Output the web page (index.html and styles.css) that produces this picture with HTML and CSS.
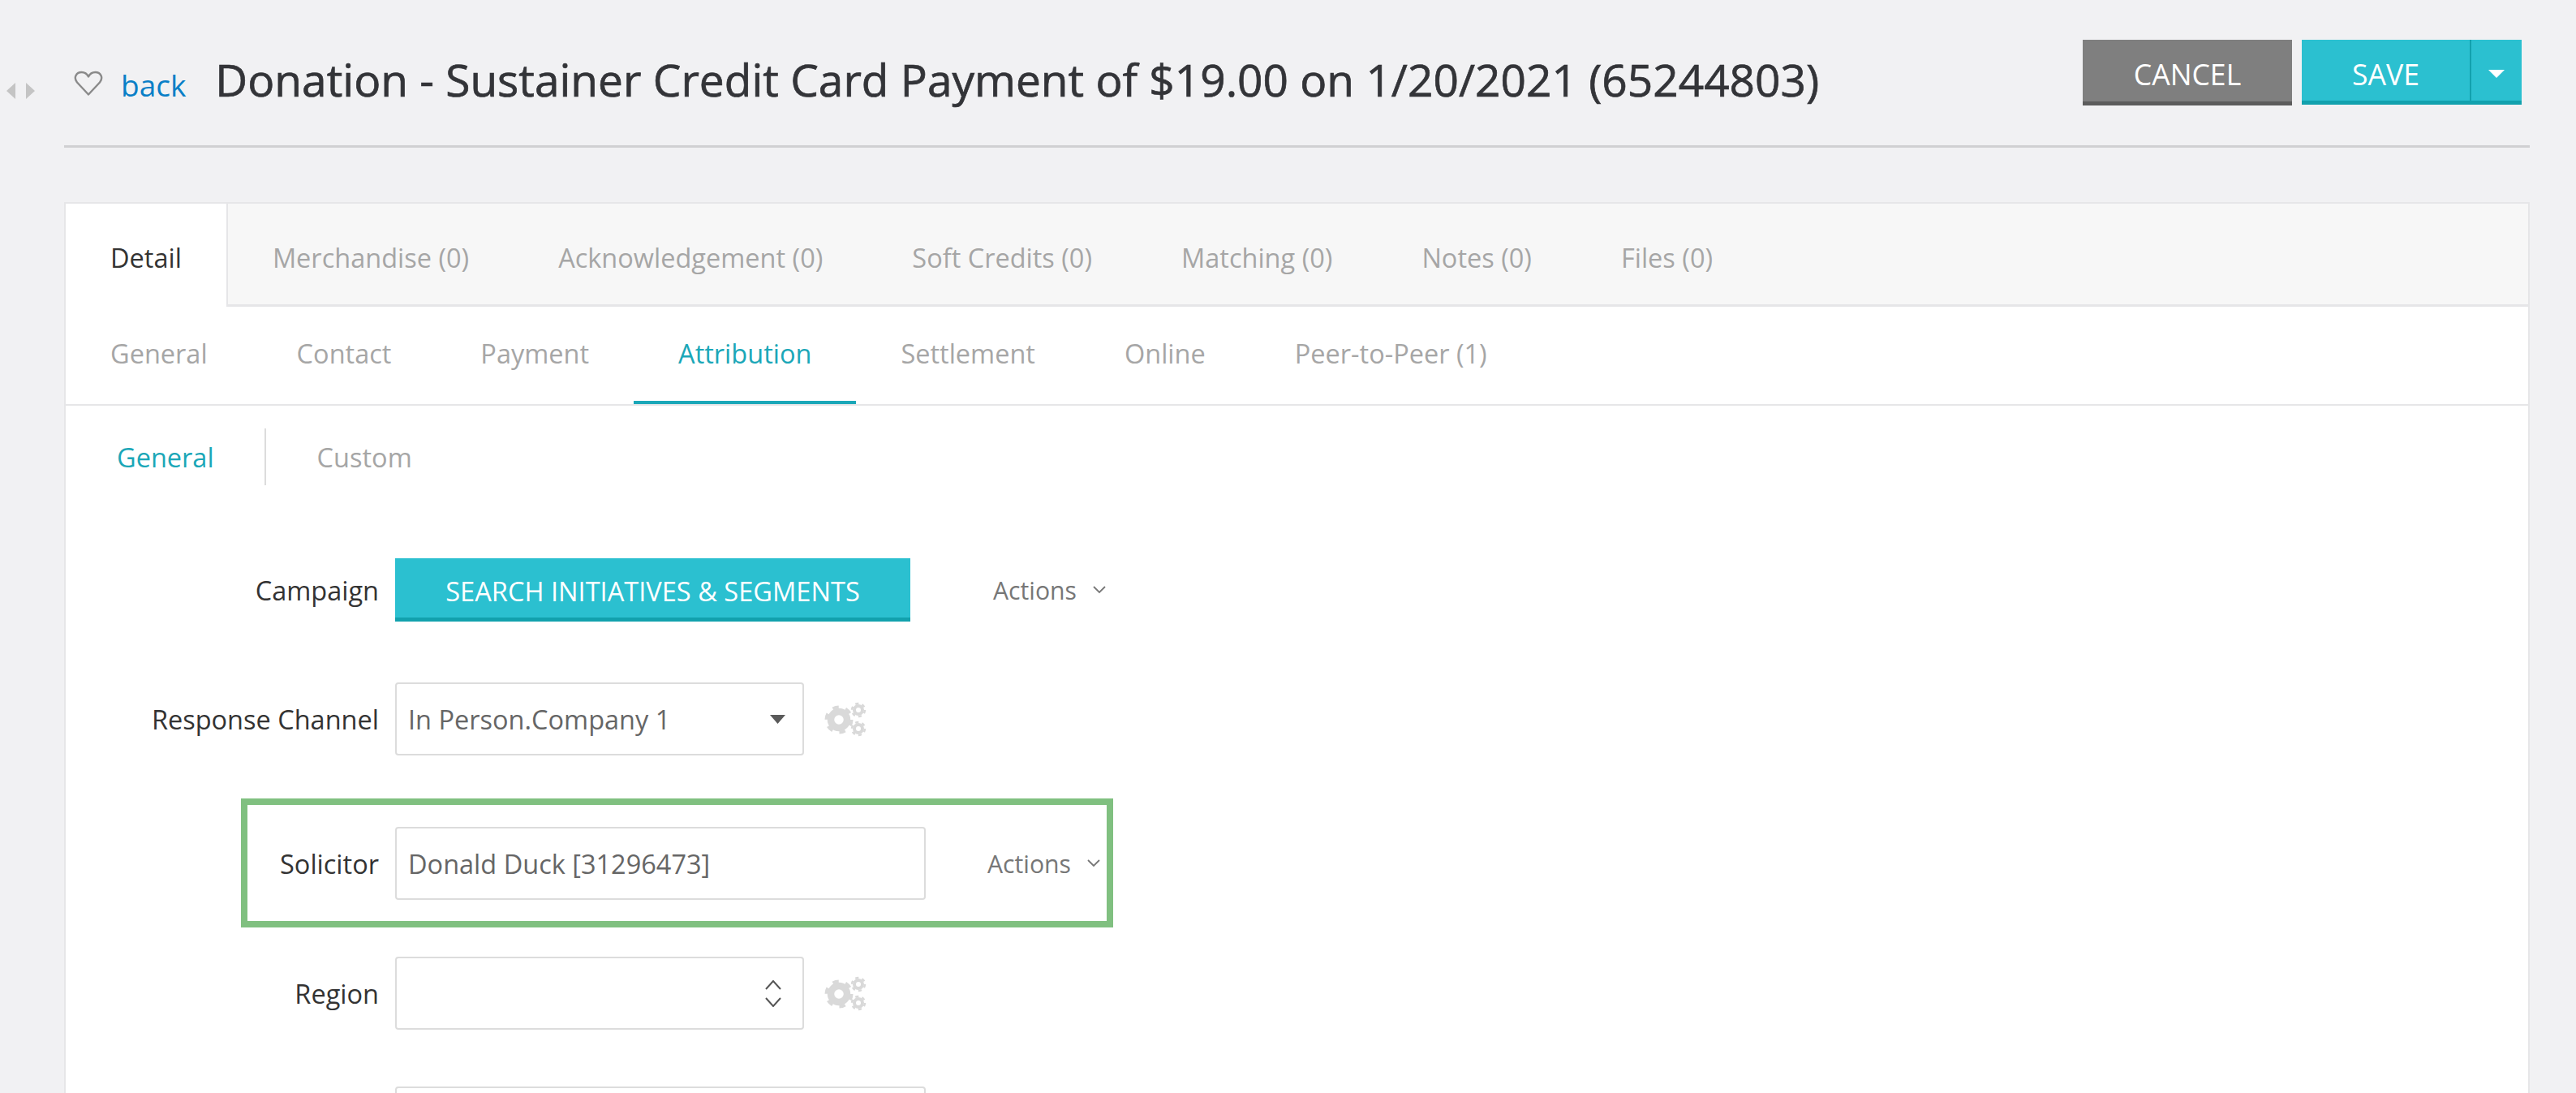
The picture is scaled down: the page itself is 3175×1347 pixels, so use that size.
FILE: index.html
```html
<!DOCTYPE html>
<html lang="en">
<head>
  <meta charset="UTF-8">
  <title>Donation - Sustainer Credit Card Payment</title>
  <link rel="stylesheet" href="styles.css">
</head>
<body>
  <svg class="defs" width="0" height="0">
    <symbol id="gears" viewBox="0 0 52 46">
      <g fill="none" stroke="#d9d9d9">
        <circle cx="18" cy="24" r="10" stroke-width="8.5"/>
        <circle cx="18" cy="24" r="15.5" stroke-width="4" stroke-dasharray="7.5 8.7"/>
        <circle cx="42" cy="12" r="5" stroke-width="4"/>
        <circle cx="42" cy="12" r="8" stroke-width="2.5" stroke-dasharray="4.2 4.2"/>
        <circle cx="42" cy="35" r="5" stroke-width="4"/>
        <circle cx="42" cy="35" r="8" stroke-width="2.5" stroke-dasharray="4.2 4.2"/>
      </g>
    </symbol>
  </svg>

  <!-- side handle -->
  <div class="handle">
    <svg width="37" height="20" viewBox="0 0 37 20"><path d="M12 0v20L1 10zM25 0v20l11-10z" fill="#c4c4c4"/></svg>
  </div>

  <header class="page-head">
    <div class="head-left">
      <svg class="heart" width="36" height="32" viewBox="0 0 36 32"><path d="M18 29.5 4 14.5C-1 8 3.500 2 9.500 2c3.800 0 6.800 2 8.500 5.500C19.700 4 22.700 2 26.500 2 32.500 2 37 8 32 14.500z" fill="none" stroke="#8a8a8a" stroke-width="2.400" stroke-linejoin="round"/></svg>
      <a class="back" href="#">back</a>
      <h1>Donation - Sustainer Credit Card Payment of $19.00 on 1/20/2021 (65244803)</h1>
    </div>
    <div class="head-actions">
      <button class="btn btn-grey">CANCEL</button>
      <div class="split">
        <button class="btn btn-teal btn-save">SAVE</button>
        <button class="btn btn-teal btn-caret"><svg width="20" height="10" viewBox="0 0 20 10"><path d="M0 0h20L10 10z" fill="#fff"/></svg></button>
      </div>
    </div>
  </header>

  <main class="card">
    <nav class="tabs">
      <a class="tab active" href="#">Detail</a>
      <a class="tab" href="#">Merchandise (0)</a>
      <a class="tab" href="#">Acknowledgement (0)</a>
      <a class="tab" href="#">Soft Credits (0)</a>
      <a class="tab" href="#">Matching (0)</a>
      <a class="tab" href="#">Notes (0)</a>
      <a class="tab" href="#">Files (0)</a>
    </nav>
    <nav class="subtabs">
      <a class="subtab" href="#">General</a>
      <a class="subtab" href="#">Contact</a>
      <a class="subtab" href="#">Payment</a>
      <a class="subtab active" href="#">Attribution</a>
      <a class="subtab" href="#">Settlement</a>
      <a class="subtab" href="#">Online</a>
      <a class="subtab" href="#">Peer-to-Peer (1)</a>
    </nav>
    <nav class="pills">
      <a class="pill active" href="#">General</a>
      <a class="pill" href="#">Custom</a>
    </nav>

    <section class="form">
      <div class="row row-campaign">
        <label>Campaign</label>
        <button class="btn btn-teal btn-search">SEARCH INITIATIVES &amp; SEGMENTS</button>
        <a class="actions" href="#">Actions <svg width="16" height="10" viewBox="0 0 16 10"><path d="M1 1l7 7 7-7" fill="none" stroke="#777" stroke-width="1.800"/></svg></a>
      </div>

      <div class="row row-channel">
        <label>Response Channel</label>
        <div class="input input-short">
          <span>In Person.Company 1</span>
          <svg class="caret" width="19" height="11" viewBox="0 0 19 11"><path d="M0 0h19L9.500 11z" fill="#5a5a5a"/></svg>
        </div>
        <svg class="gears"><use href="#gears"/></svg>
      </div>

      <div class="row highlight">
        <label>Solicitor</label>
        <div class="input input-long"><span>Donald Duck [31296473]</span></div>
        <a class="actions" href="#">Actions <svg width="16" height="10" viewBox="0 0 16 10"><path d="M1 1l7 7 7-7" fill="none" stroke="#777" stroke-width="1.800"/></svg></a>
      </div>

      <div class="row row-region">
        <label>Region</label>
        <div class="input input-short">
          <svg class="updown" width="20" height="33" viewBox="0 0 20 33"><path d="M1 11 10 1l9 10M1 22l9 10 9-10" fill="none" stroke="#555" stroke-width="2"/></svg>
        </div>
        <svg class="gears"><use href="#gears"/></svg>
      </div>

      <div class="row row-last">
        <label></label>
        <div class="input input-long"></div>
      </div>
    </section>
  </main>
</body>
</html>
```

FILE: styles.css
```css
html, body {
  margin: 0;
  height: 1347px;
  overflow: hidden;
}

body {
  font-family: "Open Sans", sans-serif;
  font-size: 32.5px;
  background-color: #f1f1f3;
  color: #333;
  position: relative;
}

a {
  text-decoration: none;
  color: inherit;
}

.defs {
  position: absolute;
}

.handle {
  position: absolute;
  left: 7px;
  top: 102px;
  line-height: 0;
}

/* Header */
.page-head {
  margin: 0 57px 0 79px;
  height: 179px;
  border-bottom: 3px solid #d0d0d2;
  display: flex;
  justify-content: space-between;
  align-items: flex-start;
  padding-right: 10px;
}

.head-left {
  display: flex;
  align-items: baseline;
  padding-top: 60px;
}

.heart {
  margin-left: 12px;
  align-self: flex-start;
  margin-top: -32px;
  transform: translateY(59px);
}

.back {
  color: #0a7fc7;
  font-size: 37px;
  margin-left: 22px;
}

h1 {
  margin: 0 0 0 36px;
  font-size: 55px;
  font-weight: 400;
  color: #333438;
  -webkit-text-stroke: 0.7px #333438;
}

.head-actions {
  display: flex;
  gap: 12px;
  padding-top: 49px;
}

.btn {
  border: 0;
  border-radius: 0;
  font-family: inherit;
  color: #fff;
  cursor: pointer;
  padding: 8px 0 0;
}

.btn-grey {
  width: 258px;
  height: 81px;
  font-size: 35.6px;
  background-color: #7f7f7f;
  border-bottom: 5px solid #5c5c5c;
}

.btn-teal {
  background-color: #2bc0d0;
  border-bottom: 5px solid #12a1ad;
}

.split {
  display: flex;
}

.btn-save {
  width: 209px;
  height: 80px;
  font-size: 35.6px;
  border-right: 2px solid #12a1ad;
}

.btn-caret {
  width: 62px;
  height: 80px;
}

/* Card */
.card {
  margin: 67px 57px 0 79px;
  height: 1098px;
  overflow: hidden;
  box-sizing: border-box;
  background-color: #fff;
  border: 2px solid #e6e6e8;
  border-bottom: 0;
}

.tabs {
  display: flex;
  height: 127px;
  background-color: #f7f7f7;
  border-bottom: 3px solid #e6e6e8;
  box-sizing: border-box;
}

.tab {
  padding: 0 55px;
  line-height: 133px;
  color: #a6a6a6;
}

.tab.active {
  color: #333;
  background-color: #fff;
  height: 127px;
  box-sizing: border-box;
  border-right: 2px solid #e6e6e8;
}

.subtabs {
  display: flex;
  height: 122px;
  box-sizing: border-box;
  border-bottom: 2px solid #e6e6e8;
}

.subtab {
  padding: 0 55px;
  height: 120px;
  line-height: 115px;
  box-sizing: border-box;
  color: #a6a6a6;
}

.subtab.active {
  color: #1ba7b8;
  border-bottom: 4px solid #1ba7b8;
}

.pills {
  display: flex;
  margin-top: 28px;
  padding-left: 63px;
}

.pill {
  height: 70px;
  line-height: 72px;
  color: #a6a6a6;
}

.pill.active {
  color: #1ba7b8;
  padding-right: 62px;
  margin-right: 63px;
  border-right: 2px solid #dcdcdc;
}

/* Form rows */
.form {
  padding-top: 90px;
}

.row {
  display: flex;
  align-items: center;
}

.row label {
  width: 406px;
  padding-right: 20px;
  box-sizing: border-box;
  text-align: right;
  color: #333;
}

.row-channel {
  margin-top: 75px;
}

.highlight {
  margin: 53px 0 36px 216px;
  width: 1075px;
  box-sizing: border-box;
  border: 8px solid #80c080;
  padding: 27px 0 26px;
}

.highlight label {
  width: 182px;
}

.row-last {
  margin-top: 70px;
}

.btn-search {
  width: 635px;
  height: 78px;
  font-size: 32.6px;
}

.input {
  height: 90px;
  box-sizing: border-box;
  border: 2px solid #dcdcdc;
  border-radius: 4px;
  background-color: #fff;
  color: #666;
  padding: 0 14px;
  display: flex;
  align-items: center;
  justify-content: space-between;
}

.input-short {
  width: 504px;
}

.input-long {
  width: 654px;
}

.row-region .input {
  justify-content: flex-end;
}

.caret {
  margin-right: 7px;
}

.updown {
  margin-right: 12px;
}

.gears {
  width: 52px;
  height: 46px;
  margin-left: 25px;
}

.actions {
  font-size: 30.200px;
  color: #777;
  display: flex;
  align-items: center;
  gap: 20px;
  margin-left: 102px;
}

.highlight .actions {
  margin-left: 76px;
}
```
